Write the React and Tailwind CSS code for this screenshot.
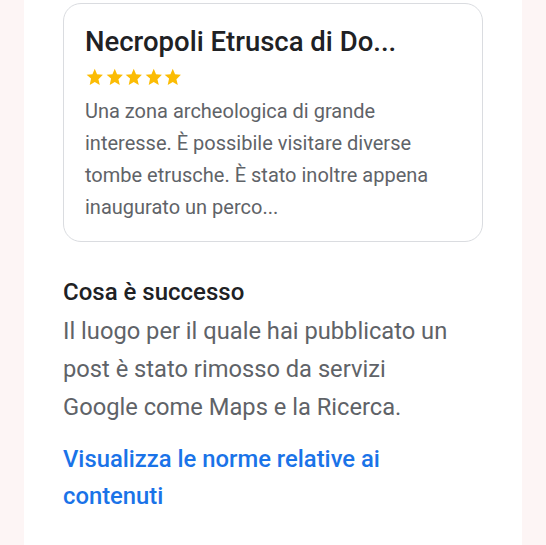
import React from 'react';

const Star = () => (
  <svg viewBox="0 0 24 24" className="w-[19.5px] h-[19.5px] fill-[#fbbc04]">
    <path d="M12 17.27L18.18 21l-1.64-7.03L22 8.24l-7.19-.61L12 1 9.19 7.63 2 8.24l5.46 4.73L5.82 21z" />
  </svg>
);

const App = () => {
  return (
    <div className="min-h-[545px] bg-[#fdf5f5] flex justify-center" style={{ fontFamily: 'Roboto, "Noto Sans", sans-serif' }}>
      <div className="w-[498px] bg-white px-[39px] pt-[3px] h-[545px] overflow-hidden">
        <div className="w-[420px] rounded-[18px] border border-[#dadce0] pl-[21px] pr-[27px] pt-[20px] pb-[18px]">
          <h2 className="text-[27.5px] leading-[36px] text-[#202124] font-medium whitespace-nowrap">Necropoli Etrusca di Do...</h2>
          <div className="flex mt-[8px]">
            {[0, 1, 2, 3, 4].map(i => <Star key={i} />)}
          </div>
          <p className="mt-[7px] text-[20px] leading-[32px] text-[#5f6368]">
            Una zona archeologica di grande interesse. È possibile visitare diverse tombe etrusche. È stato inoltre appena inaugurato un perco...
          </p>
        </div>

        <div className="mt-[34px]">
          <h3 className="text-[24px] leading-[32px] text-[#202124] font-medium">Cosa è successo</h3>
          <p className="text-[23.7px] leading-[38px] text-[#5f6368] mt-[4px] w-[400px]">
            Il luogo per il quale hai pubblicato un post è stato rimosso da servizi Google come Maps e la Ricerca.
          </p>
          <a href="#" className="block mt-[15px] text-[23.8px] leading-[37px] text-[#1a73e8] font-medium w-[420px]">
            Visualizza le norme relative ai contenuti
          </a>
        </div>
      </div>
    </div>
  );
};

export default App;
